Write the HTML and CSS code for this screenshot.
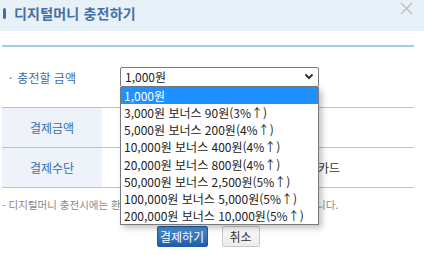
FILE: index.html
```html
<!DOCTYPE html>
<html lang="ko">
<head>
<meta charset="utf-8">
<link rel="stylesheet" href="styles.css">
</head>
<body>
<div class="dialog">
  <div class="header">
    <span class="bar"></span>
    <span class="title">디지털머니 충전하기</span>
    <svg class="close" width="13" height="13" viewBox="0 0 13 13"><path d="M1 1L12 12M12 1L1 12" stroke="#b9bcbf" stroke-width="1.2" fill="none"/></svg>
  </div>
  <div class="body">
    <div class="divider"></div>
    <div class="amount-row">
      <span class="amount-label"><span class="dot">·</span>충전할 금액</span>
      <div class="select">
        <span>1,000원</span>
        <svg width="10" height="7" viewBox="0 0 10 7"><path d="M1.5 1.5L5 5L8.5 1.5" stroke="#333" stroke-width="2" fill="none"/></svg>
      </div>
    </div>
    <div class="table">
      <div class="th">결제금액</div>
      <div class="td">1,000원</div>
      <div class="th">결제수단</div>
      <div class="td"><span class="pay">신용카드</span></div>
    </div>
    <p class="note">- 디지털머니 충전시에는 환불이 불가능하오니 신중하게 결정하시기 바랍니다.</p>
    <div class="buttons">
      <button class="btn primary">결제하기</button>
      <button class="btn cancel">취소</button>
    </div>
  </div>
  <ul class="dropdown">
    <li class="sel">1,000원</li>
    <li>3,000원 보너스 90원(3%↑)</li>
    <li>5,000원 보너스 200원(4%↑)</li>
    <li>10,000원 보너스 400원(4%↑)</li>
    <li>20,000원 보너스 800원(4%↑)</li>
    <li>50,000원 보너스 2,500원(5%↑)</li>
    <li>100,000원 보너스 5,000원(5%↑)</li>
    <li>200,000원 보너스 10,000원(5%↑)</li>
  </ul>
</div>
</body>
</html>
```
FILE: styles.css
```css
* { box-sizing: border-box; }
body {
  margin: 0;
  background: #fff;
  font-family: "Noto Sans CJK KR", "Noto Sans", sans-serif;
  font-size: 12px;
  color: #333;
}
.dialog {
  position: relative;
  width: 424px;
  height: 263px;
}
.header {
  height: 31px;
  background: #e9f1f8;
  display: flex;
  align-items: center;
  padding-left: 3px;
  padding-right: 11px;
}
.bar {
  width: 3px;
  height: 11px;
  border-radius: 2px;
  background: #3c6fb0;
  margin-top: -5px;
}
.title {
  margin-left: 8px;
  font-size: 14px;
  font-weight: bold;
  color: #416fa8;
  line-height: 20px;
  margin-top: -6px;
  letter-spacing: 0.2px;
}
.close {
  margin-left: auto;
  margin-top: -14px;
}
.body {
  padding: 0 10px 0 2px;
}
.divider {
  margin-top: 14px;
  height: 2px;
  background: #a3cde5;
}
.amount-row {
  height: 60px;
  display: flex;
  align-items: center;
}
.amount-label {
  color: #3a6ea8;
  font-size: 12px;
  width: 118px;
  padding-left: 7px;
}
.dot {
  color: #777;
  margin-right: 5px;
}
.select {
  width: 199px;
  height: 20px;
  border: 1px solid #7a7a7a;
  border-radius: 2px;
  display: flex;
  align-items: center;
  justify-content: space-between;
  padding: 0 4px 0 4px;
  font-size: 12px;
  color: #222;
  margin-top: -1px;
}
.table {
  display: grid;
  grid-template-columns: 100px 1fr;
  border-top: 1px solid #a9c8e2;
}
.th, .td {
  height: 40px;
  border-bottom: 1px solid #a9c8e2;
  display: flex;
  align-items: center;
}
.th {
  background: #eef3f9;
  justify-content: center;
  color: #3a6ea8;
}
.td {
  padding-left: 20px;
}
.pay {
  padding-left: 174px;
  color: #333;
}
.note {
  margin: 9px 0 0 0;
  font-size: 10.5px;
  color: #888;
  line-height: 16px;
  white-space: nowrap;
}
.buttons {
  display: flex;
  justify-content: center;
  gap: 14px;
  margin-top: 13px;
}
.btn {
  font-family: inherit;
  font-size: 12px;
  height: 21px;
  padding: 0;
  border: 1px solid #c9c9c9;
  border-radius: 2px;
  background: linear-gradient(#fbfbfb, #ececec);
  color: #333;
  line-height: 19px;
  text-align: center;
}
.primary {
  width: 51px;
  background: linear-gradient(#4a8fd0, #1f5ea9);
  border-color: #1d5ba3;
  color: #fff;
}
.cancel {
  width: 38px;
}
.dropdown {
  position: absolute;
  left: 120px;
  top: 87px;
  width: 199px;
  margin: 0;
  padding: 0;
  list-style: none;
  background: #fff;
  border: 1px solid #7a7a7a;
  border-top: none;
  box-shadow: 3px 3px 6px rgba(0,0,0,0.25);
}
.dropdown li {
  height: 17.125px;
  line-height: 17px;
  padding-left: 3px;
  font-size: 12px;
  color: #222;
  white-space: nowrap;
}
.dropdown li.sel {
  background: #1e90ff;
  color: #fff;
}
```
